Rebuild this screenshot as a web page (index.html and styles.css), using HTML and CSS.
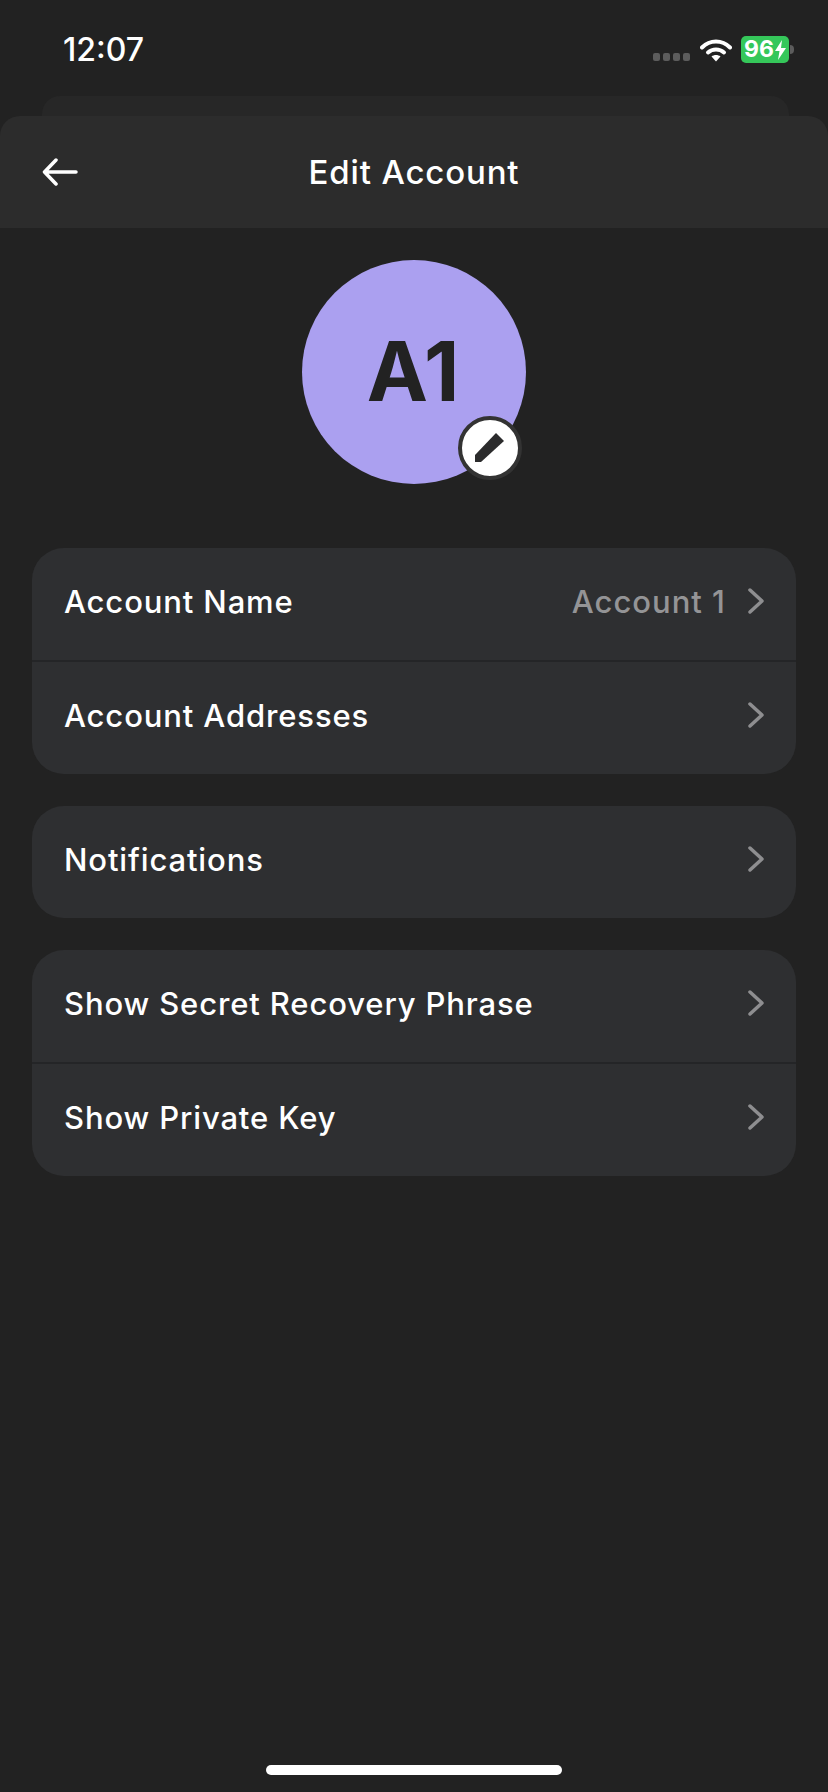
FILE: index.html
```html
<!DOCTYPE html>
<html lang="en">
<head>
    <meta charset="UTF-8">
    <meta name="viewport" content="width=device-width, initial-scale=1.0">
    <title>Edit Account</title>
    <link rel="stylesheet" href="styles.css">
</head>
<body>
    <div class="status-bar">
        <span class="clock">12:07</span>
        <div class="status-icons">
            <div class="signal"><i></i><i></i><i></i><i></i></div>
            <svg class="wifi" width="32" height="24" viewBox="0 0 32 24">
                <path d="M2 9.5 C10 1.500 22 1.500 30 9.500" fill="none" stroke="#fff" stroke-width="4" stroke-linecap="round"/>
                <path d="M8 14.500 C12.500 10.500 19.500 10.500 24 14.500" fill="none" stroke="#fff" stroke-width="4" stroke-linecap="round"/>
                <path d="M11.500 18.500 L16 23.500 L20.500 18.500 C18 16.500 14 16.500 11.500 18.500 Z" fill="#fff"/>
            </svg>
            <div class="battery">
                <div class="battery-body">96<svg width="11" height="20" viewBox="0 0 11 20"><path d="M7 0 L0 11 H4.500 L3 20 L11 8 H6 Z" fill="#fff"/></svg></div>
                <div class="battery-cap"></div>
            </div>
        </div>
    </div>

    <div class="sheet-behind"></div>
    <div class="sheet-header">
        <svg class="back" width="36" height="28" viewBox="0 0 36 28">
            <path d="M34 14 H3 M14 2 L2.500 14 L14 26" fill="none" stroke="#fff" stroke-width="3.500" stroke-linecap="round" stroke-linejoin="round"/>
        </svg>
        <h1>Edit Account</h1>
    </div>

    <div class="avatar-wrap">
        <div class="avatar">
            <span class="avatar-text">A1</span>
            <div class="edit-badge">
                <svg width="30" height="30" viewBox="0 0 30 30">
                    <path d="M21 0 L29 8 L6 29 H0 V22 Z" fill="#2b2b2c"/>
                </svg>
            </div>
        </div>
    </div>

    <div class="card">
        <div class="row">
            <span class="row-label">Account Name</span>
            <span class="row-value">Account 1</span>
            <svg class="chevron" width="16" height="26" viewBox="0 0 16 26"><path d="M2 2 L14 13 L2 24" fill="none" stroke="#8e8e90" stroke-width="3.500" stroke-linecap="round" stroke-linejoin="round"/></svg>
        </div>
        <div class="row">
            <span class="row-label">Account Addresses</span>
            <svg class="chevron" width="16" height="26" viewBox="0 0 16 26"><path d="M2 2 L14 13 L2 24" fill="none" stroke="#8e8e90" stroke-width="3.500" stroke-linecap="round" stroke-linejoin="round"/></svg>
        </div>
    </div>

    <div class="card">
        <div class="row">
            <span class="row-label">Notifications</span>
            <svg class="chevron" width="16" height="26" viewBox="0 0 16 26"><path d="M2 2 L14 13 L2 24" fill="none" stroke="#8e8e90" stroke-width="3.500" stroke-linecap="round" stroke-linejoin="round"/></svg>
        </div>
    </div>

    <div class="card">
        <div class="row">
            <span class="row-label">Show Secret Recovery Phrase</span>
            <svg class="chevron" width="16" height="26" viewBox="0 0 16 26"><path d="M2 2 L14 13 L2 24" fill="none" stroke="#8e8e90" stroke-width="3.500" stroke-linecap="round" stroke-linejoin="round"/></svg>
        </div>
        <div class="row">
            <span class="row-label">Show Private Key</span>
            <svg class="chevron" width="16" height="26" viewBox="0 0 16 26"><path d="M2 2 L14 13 L2 24" fill="none" stroke="#8e8e90" stroke-width="3.500" stroke-linecap="round" stroke-linejoin="round"/></svg>
        </div>
    </div>

    <div class="home-bar"></div>
</body>
</html>
```

FILE: styles.css
```css
html, body {
    margin: 0;
    padding: 0;
}
body {
    width: 828px;
    height: 1792px;
    background-color: #222222;
    font-family: Inter, "Liberation Sans", sans-serif;
    color: #fff;
    overflow: hidden;
    position: relative;
}
.status-bar {
    height: 96px;
    padding: 0 34px 0 63px;
    display: flex;
    justify-content: space-between;
    align-items: flex-start;
    box-sizing: border-box;
}
.clock {
    font-size: 32px;
    font-weight: 500;
    line-height: 38px;
    margin-top: 31px;
}
.status-icons {
    display: flex;
    align-items: center;
    margin-top: 36px;
}
.signal {
    display: flex;
    gap: 3px;
    margin-right: 10px;
    margin-top: 14px;
}
.signal i {
    width: 7px;
    height: 8px;
    border-radius: 2px;
    background-color: #5c5c5c;
}
.wifi {
    margin-right: 9px;
}
.battery {
    display: flex;
    align-items: center;
}
.battery-body {
    width: 48px;
    height: 27px;
    border-radius: 5px;
    background-color: #35c75a;
    font-size: 23px;
    font-weight: 700;
    line-height: 27px;
    display: flex;
    align-items: center;
    justify-content: center;
    gap: 1px;
}
.battery-cap {
    width: 4px;
    height: 9px;
    margin-left: 1px;
    border-radius: 0 4px 4px 0;
    background-color: #5c5c5c;
}
.sheet-behind {
    height: 20px;
    margin: 0 39px 0 42px;
    border-radius: 18px 18px 0 0;
    background-color: #272727;
}
.sheet-header {
    height: 112px;
    border-radius: 20px 20px 0 0;
    background-color: #2c2c2c;
    display: flex;
    align-items: center;
    justify-content: center;
    position: relative;
}
.sheet-header h1 {
    margin: 0;
    font-size: 33px;
    font-weight: 500;
    letter-spacing: 0.85px;
}
.back {
    position: absolute;
    left: 42px;
    top: 42px;
}
.avatar-wrap {
    display: flex;
    justify-content: center;
    padding: 32px 0 64px;
}
.avatar {
    width: 224px;
    height: 224px;
    border-radius: 50%;
    background-color: #aba0f0;
    color: #222222;
    font-size: 82px;
    font-weight: 700;
    display: flex;
    align-items: center;
    justify-content: center;
    position: relative;
}
.avatar-text {
    margin: 0 2px 2px 0;
}
.edit-badge {
    position: absolute;
    right: 4px;
    bottom: 4px;
    width: 56px;
    height: 56px;
    border: 4px solid #333333;
    border-radius: 50%;
    background-color: #fff;
    display: flex;
    align-items: center;
    justify-content: center;
}
.card {
    margin: 0 32px 32px;
    border-radius: 32px;
    background-color: #2e2f31;
}
.row {
    height: 112px;
    padding: 0 32px 6px;
    box-sizing: border-box;
    display: flex;
    align-items: center;
}
.row + .row {
    height: 114px;
    border-top: 2px solid #242527;
}
.row-label {
    flex: 1;
    font-size: 31px;
    font-weight: 500;
    letter-spacing: 0.87px;
}
.row-value {
    font-size: 31px;
    font-weight: 500;
    letter-spacing: 1px;
    color: #949496;
    margin-right: 22px;
}
.home-bar {
    position: absolute;
    left: 266px;
    bottom: 17px;
    width: 296px;
    height: 10px;
    border-radius: 5px;
    background-color: #fff;
}
```
